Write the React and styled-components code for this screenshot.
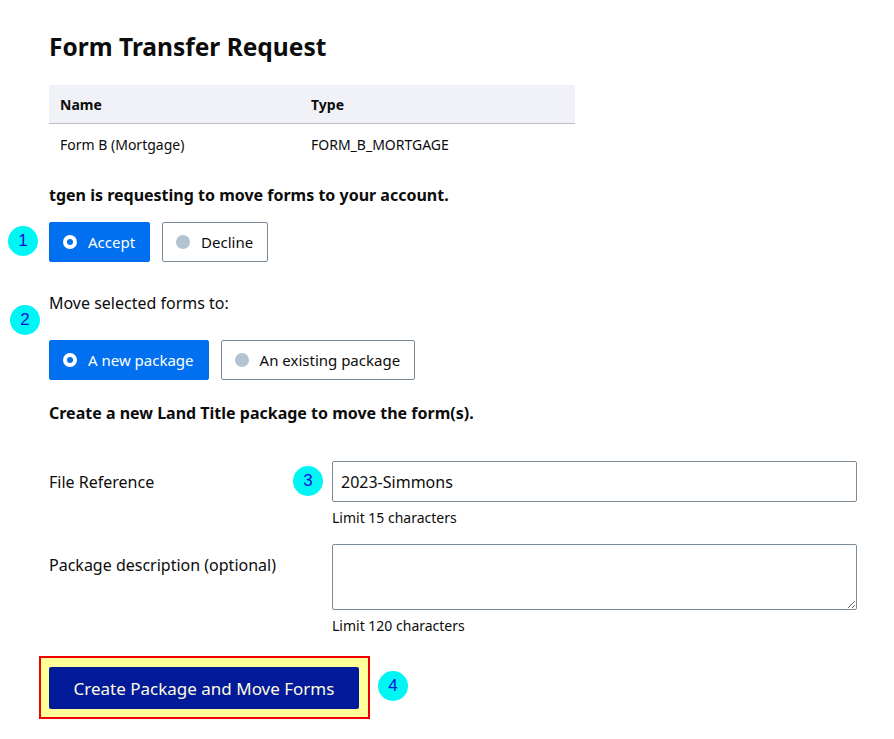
import styled, { createGlobalStyle } from "styled-components";

const GlobalStyle = createGlobalStyle`
  html, body {
    margin: 0;
    padding: 0;
    background: #fff;
  }
  body {
    font-family: "Noto Sans", "Open Sans", sans-serif;
    color: #0c0c0c;
  }
`;

const Page = styled.main`
  padding: 29px 37px 20px 49px;
  display: flex;
  flex-direction: column;
`;

const Title = styled.h1`
  margin: 0;
  font-size: 24.5px;
  line-height: 36px;
  font-weight: 700;
`;

const Table = styled.table`
  width: 526px;
  margin-top: 20px;
  border-collapse: collapse;
  table-layout: fixed;
  font-size: 14px;
  th, td {
    text-align: left;
    padding: 0 11px;
  }
  th:first-child {
    width: 229px;
  }
  th {
    height: 38px;
    background: #f1f2f7;
    border-bottom: 1px solid #b9bfc7;
    font-weight: 700;
  }
  td {
    height: 41px;
  }
`;

const Lead = styled.p`
  margin: 17px 0 0;
  font-size: 16px;
  line-height: 24px;
  font-weight: ${(p) => (p.bold ? 700 : 400)};
`;

const Step = styled.div`
  position: relative;
`;

const Badge = styled.span`
  position: absolute;
  width: 30px;
  height: 30px;
  border-radius: 50%;
  background: #00f5f5;
  color: #1010e0;
  font-family: "Liberation Sans", Arial, sans-serif;
  font-size: 17px;
  display: flex;
  align-items: center;
  justify-content: center;
  left: ${(p) => p.left}px;
  top: ${(p) => p.top}px;
`;

const Choices = styled.div`
  display: flex;
  gap: 12px;
  margin-top: ${(p) => p.mt || 0}px;
`;

const Choice = styled.button`
  height: 40px;
  padding: 0 14px 0 13px;
  display: flex;
  align-items: center;
  gap: 11px;
  font-family: inherit;
  font-size: 15px;
  border-radius: 2px;
  cursor: pointer;
  background: ${(p) => (p.selected ? "#0070f0" : "#fff")};
  color: ${(p) => (p.selected ? "#fff" : "#0c0c0c")};
  border: 1px solid ${(p) => (p.selected ? "#0070f0" : "#7d8a97")};
`;

const Dot = styled.span`
  width: 14px;
  height: 14px;
  border-radius: 50%;
  box-sizing: border-box;
  background: ${(p) => (p.selected ? "#0070f0" : "#b3c3d1")};
  border: ${(p) => (p.selected ? "4px solid #fff" : "none")};
`;

const FieldGrid = styled.div`
  display: grid;
  grid-template-columns: 283px 1fr;
  row-gap: 17px;
  margin-top: 36px;
`;

const Label = styled.label`
  font-size: 16px;
  line-height: 24px;
  padding-top: 9px;
`;

const Control = styled.div`
  position: relative;
  display: flex;
  flex-direction: column;
`;

const Input = styled.input`
  height: 41px;
  box-sizing: border-box;
  border: 1px solid #7d8a97;
  border-radius: 2px;
  padding: 0 8px;
  font-family: inherit;
  font-size: 16px;
  color: #0c0c0c;
`;

const TextArea = styled.textarea`
  height: 66px;
  box-sizing: border-box;
  border: 1px solid #7d8a97;
  border-radius: 2px;
  padding: 8px;
  font-family: inherit;
  font-size: 16px;
`;

const Hint = styled.span`
  font-size: 14px;
  line-height: 18px;
  margin-top: 7px;
`;

const Actions = styled.div`
  position: relative;
  margin: 21px 0 0 -10px;
  align-self: flex-start;
`;

const Highlight = styled.div`
  border: 2px solid #f00000;
  background: #ffff99;
  padding: 9px 9px 8px 8px;
`;

const Primary = styled.button`
  display: block;
  height: 42px;
  width: 310px;
  border: none;
  border-radius: 2px;
  background: #001a99;
  color: #fffbe0;
  font-family: inherit;
  font-size: 17px;
  cursor: pointer;
`;

export default function App() {
  return (
    <>
      <GlobalStyle />
      <Page>
        <Title>Form Transfer Request</Title>
        <Table>
          <thead>
            <tr>
              <th>Name</th>
              <th>Type</th>
            </tr>
          </thead>
          <tbody>
            <tr>
              <td>Form B (Mortgage)</td>
              <td>FORM_B_MORTGAGE</td>
            </tr>
          </tbody>
        </Table>

        <Lead bold style={{ marginTop: 18 }}>
          tgen is requesting to move forms to your account.
        </Lead>
        <Step>
          <Badge left={-41} top={19}>1</Badge>
          <Choices mt={15}>
            <Choice selected>
              <Dot selected />
              Accept
            </Choice>
            <Choice>
              <Dot />
              Decline
            </Choice>
          </Choices>
        </Step>

        <Step>
          <Badge left={-39} top={43}>2</Badge>
          <Lead style={{ marginTop: 29 }}>Move selected forms to:</Lead>
          <Choices mt={25}>
            <Choice selected>
              <Dot selected />
              A new package
            </Choice>
            <Choice>
              <Dot />
              An existing package
            </Choice>
          </Choices>
        </Step>

        <Lead bold style={{ marginTop: 21 }}>
          Create a new Land Title package to move the form(s).
        </Lead>

        <FieldGrid>
          <Label htmlFor="ref">File Reference</Label>
          <Control>
            <Badge left={-39} top={5}>3</Badge>
            <Input id="ref" defaultValue="2023-Simmons" />
            <Hint>Limit 15 characters</Hint>
          </Control>
          <Label htmlFor="desc">Package description (optional)</Label>
          <Control>
            <TextArea id="desc" />
            <Hint>Limit 120 characters</Hint>
          </Control>
        </FieldGrid>

        <Actions>
          <Highlight>
            <Primary>Create Package and Move Forms</Primary>
          </Highlight>
          <Badge left={339} top={15}>4</Badge>
        </Actions>
      </Page>
    </>
  );
}
